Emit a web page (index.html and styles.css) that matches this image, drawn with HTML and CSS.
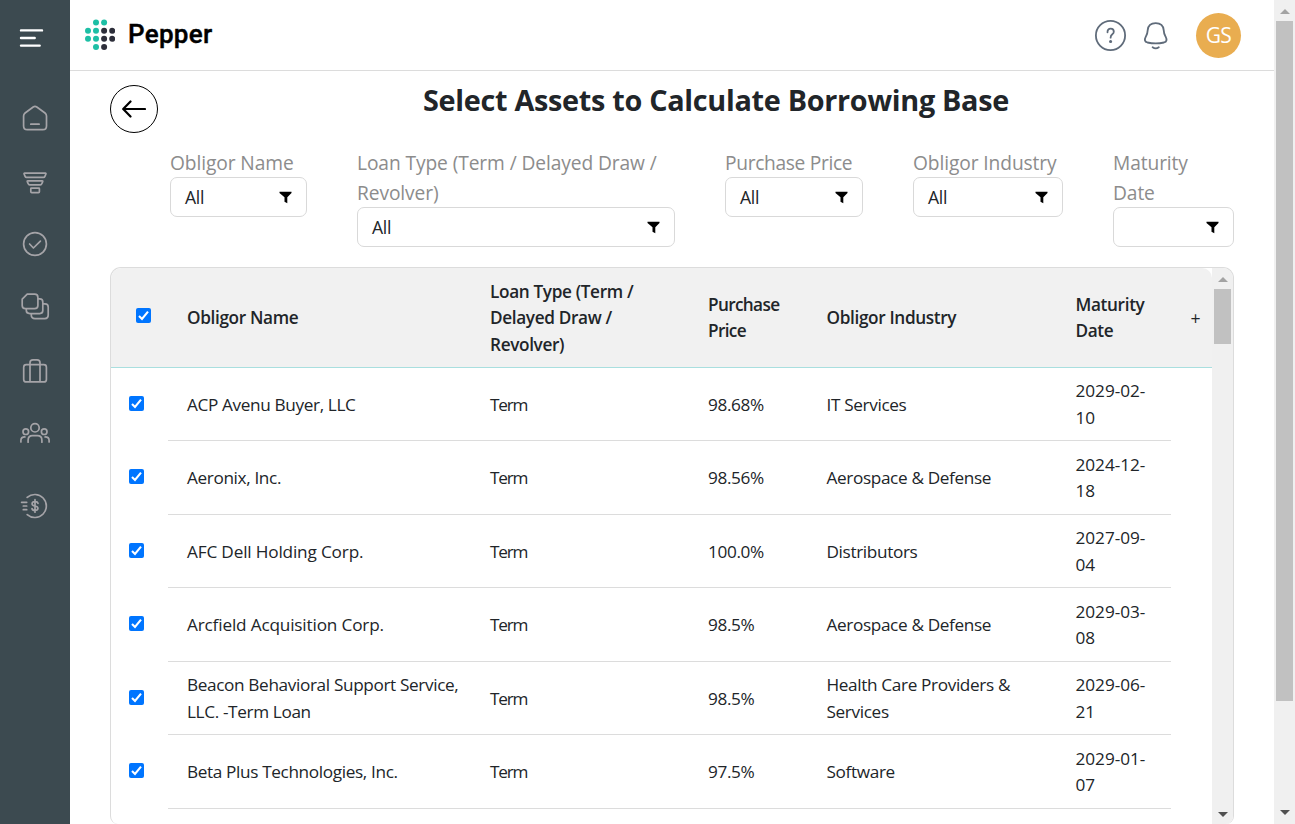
FILE: index.html
```html
<!DOCTYPE html>
<html lang="en">
<head>
<meta charset="utf-8">
<title>Pepper</title>
<link rel="stylesheet" href="styles.css">
</head>
<body>
<svg class="defs" width="0" height="0">
  <symbol id="funnel" viewBox="0 0 14 14"><path d="M.500 1.700h12v1.300L8.300 7.200V13.300L5.500 11.700V7.200L.500 3z"/></symbol>
  <symbol id="check" viewBox="0 0 15 15"><rect width="15" height="15" rx="2" fill="#0075ff"/><path d="M3 8l3 3 6-7.3" fill="none" stroke="#fff" stroke-width="2.1"/></symbol>
  <symbol id="up" viewBox="0 0 10 5"><path d="M0 5L5 0l5 5z"/></symbol>
  <symbol id="down" viewBox="0 0 10 5"><path d="M0 0h10L5 5z"/></symbol>
</svg>
<div class="app">
  <nav class="sidebar">
    <svg width="70" height="530" viewBox="0 0 70 530">
      <g stroke="#fff" stroke-width="2.4" stroke-linecap="round"><path d="M21 30.4h21M21 38h13.7M21 45.6h18.7"/></g>
      <g fill="none" stroke="#a5a4a8" stroke-width="1.7" stroke-linecap="round" stroke-linejoin="round">
        <path d="M33.2 107q1.8-1.3 3.6 0l8.2 6q1.5 1.2 1.5 3V126q0 3.7-3.7 3.7H27.3q-3.7 0-3.7-3.7v-10q0-1.8 1.5-3zM30.8 124.2h8.3"/>
        <path d="M24.6 173.2h20.8q.8 0 .5.8l-1 2.4q-.4 1-1.4 1h-17q-1 0-1.4-1l-1-2.4q-.3-.8.5-.8zM27.8 180.8h14.4q.8 0 .5.8l-.9 2.2q-.4 1-1.4 1H29.6q-1 0-1.4-1l-.9-2.2q-.3-.8.5-.8zM31.4 188.2h7.4q.6 0 .6.6v3q0 .9-.9.9h-6.8q-.9 0-.9-.9v-3q0-.6.6-.6z"/>
        <circle cx="35" cy="244" r="11.4"/><path d="M29.6 244l3.8 4 7-6.8"/>
        <path d="M27.2 294.2h7.4q3.3 0 3.3 3.3v8q0 3.2-3.3 3.2h-9.2q-3.2 0-3.2-3.2v-6.3zM38 298.9h1.8q3 0 3 3v8.7q0 3-3 3h-10q-3.5 0-3.5-3v-1.8M43 303.9h2q3.2 0 3.2 3.2v8.2q0 3.3-3.3 3.3H35q-3.7 0-3.7-3.3v-1.6"/>
        <path d="M26.3 364.6h17.5q2.6 0 2.6 2.6v12.2q0 2.5-2.6 2.5H26.3q-2.6 0-2.6-2.5v-12.2q0-2.6 2.6-2.6zM30 381.5v-18.8q0-2.9 2.9-2.9h4.2q2.9 0 2.9 2.9v18.8"/>
        <circle cx="35" cy="427.8" r="4.2"/><circle cx="25.8" cy="431.7" r="2.8"/><circle cx="44.2" cy="431.7" r="2.8"/>
        <path d="M28.1 442.2v-2q0-4.5 4.5-4.5h4.8q4.5 0 4.5 4.5v2M20.9 442v-1.5q0-3.6 4-3.6M49.1 442v-1.5q0-3.6-4-3.6"/>
        <path d="M27.2 497.4a11.5 11.5 0 1 1 0 17.2M21.6 502.3h5.1M23.3 506h3.4M23.3 509.7h3.4"/>
        <path d="M38 503.4q-.4-1.8-3-1.8-2.9 0-2.9 2.1 0 1.8 2.9 2.3t2.9 2.3q0 2.1-2.9 2.1-2.7 0-3-1.9M35 499.7v12.5"/>
      </g>
    </svg>
  </nav>
  <main class="main">
    <header class="topbar">
      <svg class="logo" width="30" height="31" viewBox="0 0 30 31">
        <g fill="#1dbfa5"><circle cx="11" cy="3.6" r="3"/><circle cx="19.1" cy="3.6" r="3"/><circle cx="3" cy="11.8" r="3"/><circle cx="11" cy="11.8" r="3"/><circle cx="3" cy="19.8" r="3"/><circle cx="11" cy="19.8" r="3"/><circle cx="11" cy="28" r="3"/></g>
        <g fill="#2d2e3a"><circle cx="19.1" cy="11.8" r="3"/><circle cx="27.2" cy="11.8" r="3"/><circle cx="19.1" cy="19.8" r="3"/><circle cx="27.2" cy="19.8" r="3"/><circle cx="19.1" cy="28" r="3"/></g>
      </svg>
      <span class="brand">Pepper</span>
      <svg class="tools" width="74" height="33" viewBox="0 0 74 33" fill="none" stroke="#5f6b7a" stroke-width="1.8" stroke-linecap="round" stroke-linejoin="round">
        <circle cx="15.5" cy="16.5" r="14.6"/><path d="M12.5 13.3q0-3.6 3.2-3.6 3.1 0 3.1 3 0 1.5-1.5 2.5-1.7 1.2-1.7 3.5"/><circle cx="15.6" cy="22.5" r=".7" fill="#5f6b7a"/>
        <path d="M60.7 4.1q7.400 0 8 7 .2 4 1.8 6.3 2.6 5-1.5 6.1-8.3 1.8-16.6 0-4.1-1.1-1.5-6.1 1.6-2.3 1.8-6.3.6-7 8-7zM57.6 28.2q3.1 2.2 6.2 0"/>
      </svg>
      <span class="avatar">GS</span>
    </header>
    <section class="content">
      <div class="titlebar">
        <button class="back" aria-label="Back"><svg width="24" height="18" viewBox="0 0 24 18" fill="none" stroke="#000" stroke-width="2.2" stroke-linecap="round" stroke-linejoin="round"><path d="M1.5 9H23M8.5 1.5L1.200 9l7.300 7.500"/></svg></button>
        <h1>Select Assets to Calculate Borrowing Base</h1>
      </div>
      <div class="filters">
        <div class="filter"><label>Obligor Name</label><div class="select">All<svg><use href="#funnel"/></svg></div></div>
        <div class="filter"><label>Loan Type (Term / Delayed Draw /<br>Revolver)</label><div class="select">All<svg><use href="#funnel"/></svg></div></div>
        <div class="filter tight"><label>Purchase Price</label><div class="select">All<svg><use href="#funnel"/></svg></div></div>
        <div class="filter"><label>Obligor Industry</label><div class="select">All<svg><use href="#funnel"/></svg></div></div>
        <div class="filter"><label>Maturity<br>Date</label><div class="select"><svg><use href="#funnel"/></svg></div></div>
      </div>
      <div class="panel">
        <div class="table">
          <div class="row head">
            <div class="pick"><svg class="box"><use href="#check"/></svg></div>
            <div class="cells"><div>Obligor Name</div><div>Loan Type (Term /<br>Delayed Draw /<br>Revolver)</div><div class="tight">Purchase<br>Price</div><div>Obligor Industry</div><div>Maturity<br>Date</div></div>
            <div class="plus">+</div>
          </div>
          <div class="row"><div class="pick"><svg class="box"><use href="#check"/></svg></div><div class="cells"><div>ACP Avenu Buyer, LLC</div><div class="term">Term</div><div>98.68%</div><div>IT Services</div><div class="date">2029-02-<br>10</div></div></div>
          <div class="row"><div class="pick"><svg class="box"><use href="#check"/></svg></div><div class="cells"><div>Aeronix, Inc.</div><div class="term">Term</div><div>98.56%</div><div>Aerospace &amp; Defense</div><div class="date">2024-12-<br>18</div></div></div>
          <div class="row"><div class="pick"><svg class="box"><use href="#check"/></svg></div><div class="cells"><div class="wide">AFC Dell Holding Corp.</div><div class="term">Term</div><div>100.0%</div><div>Distributors</div><div class="date">2027-09-<br>04</div></div></div>
          <div class="row"><div class="pick"><svg class="box"><use href="#check"/></svg></div><div class="cells"><div class="wide">Arcfield Acquisition Corp.</div><div class="term">Term</div><div>98.5%</div><div>Aerospace &amp; Defense</div><div class="date">2029-03-<br>08</div></div></div>
          <div class="row"><div class="pick"><svg class="box"><use href="#check"/></svg></div><div class="cells"><div>Beacon Behavioral Support Service,<br>LLC. -Term Loan</div><div class="term">Term</div><div>98.5%</div><div>Health Care Providers &amp;<br>Services</div><div class="date">2029-06-<br>21</div></div></div>
          <div class="row"><div class="pick"><svg class="box"><use href="#check"/></svg></div><div class="cells"><div>Beta Plus Technologies, Inc.</div><div class="term">Term</div><div>97.5%</div><div>Software</div><div class="date">2029-01-<br>07</div></div></div>
        </div>
        <div class="scrollbar inner"><svg class="arrow"><use href="#up"/></svg><div class="thumb"></div><svg class="arrow dark"><use href="#down"/></svg></div>
      </div>
    </section>
  </main>
  <div class="scrollbar outer"><svg class="arrow"><use href="#up"/></svg><div class="thumb"></div><svg class="arrow dark"><use href="#down"/></svg></div>
</div>
</body>
</html>
```
FILE: styles.css
```css
* { box-sizing: border-box; }
body { margin: 0; font-family: "Open Sans", "Noto Sans", sans-serif; color: #212529; background: #fff; overflow: hidden; }
.defs { display: none; }
.app { display: flex; height: 824px; overflow: hidden; }
.sidebar { width: 70px; flex: none; background: #3c4a50; }
.sidebar svg { display: block; }
.main { width: 1204px; flex: none; display: flex; flex-direction: column; }
.topbar { height: 71px; flex: none; border-bottom: 1px solid #dcdcdc; display: flex; align-items: center; padding: 0 33px 0 15px; }
.logo { flex: none; margin-top: -2px; }
.brand { margin-left: 13px; margin-top: -2px; font: 500 26px/32px Roboto, sans-serif; letter-spacing: .3px; color: #000; -webkit-text-stroke: .4px #000; }
.tools { margin-left: auto; margin-right: 27px; }
.avatar { width: 45px; height: 45px; border-radius: 50%; background: #e9ad50; color: #fff; font-size: 21px; line-height: 45px; text-align: center; letter-spacing: -.7px; }
.content { flex: 1; min-height: 0; padding: 14px 40px 0; display: flex; flex-direction: column; }
.titlebar { display: flex; height: 63px; flex: none; align-items: flex-start; }
.back { width: 48px; height: 48px; border: 1px solid #000; border-radius: 50%; background: #fff; padding: 0; display: grid; place-items: center; }
h1 { margin: 0 auto; padding-left: 40px; font-size: 28.8px; line-height: 30px; font-weight: 700; letter-spacing: -.29px; white-space: nowrap; }
.filters { display: grid; grid-template-columns: 137px 318px 138px 150px 121px; column-gap: 50px; padding-left: 60px; height: 119px; flex: none; align-items: start; }
.filter { min-width: 0; }
.filter label { display: block; font-size: 19.2px; line-height: 30px; margin-bottom: -1px; color: #8c8c8c; white-space: nowrap; letter-spacing: -.1px; }
.filter.tight label { letter-spacing: -.33px; }
.select { height: 40px; border: 1px solid #d9d9d9; border-radius: 7px; display: flex; align-items: center; padding: 0 13px 0 14px; font-size: 17.6px; letter-spacing: -.3px; }
.select svg { width: 14px; height: 14px; margin-left: auto; }
.panel { width: 1124px; flex: 1; min-height: 0; display: flex; border: 1px solid #dcdcdc; border-bottom: 0; border-radius: 11px 11px 8px 8px; overflow: hidden; }
.table { width: 1101px; flex: none; font-size: 17.2px; line-height: 26.4px; }
.row { display: flex; height: 73.5px; }
.pick { width: 57px; flex: none; padding: 28.4px 0 0 18px; }
.box { width: 15px; height: 15px; display: block; }
.cells { width: 1003px; flex: none; display: grid; grid-template-columns: 303px 218px 118.5px 249px 114.5px; align-items: center; border-bottom: 1px solid #dcdcdc; white-space: nowrap; letter-spacing: -.36px; }
.cells > div { padding-left: 19px; padding-top: 2px; }
.cells > .wide { letter-spacing: -.17px; }
.cells > .term { letter-spacing: -1.2px; }
.cells > .date { letter-spacing: -.02px; }
.head { height: 99.6px; background: #f1f1f1; border-bottom: 1px solid #a9dfdf; border-radius: 10px 10px 0 0; font-weight: 600; }
.head .pick { padding: 40px 0 0 25px; }
.head .cells { border: 0; letter-spacing: -.35px; }
.head .cells > .tight { letter-spacing: -.65px; }
.plus { flex: 1; display: grid; place-items: center; padding: 2px 0 0 8px; font-weight: 400; font-size: 17.6px; }
.scrollbar { width: 21px; flex: none; background: #f0f0f0; display: flex; flex-direction: column; align-items: center; }
.arrow { width: 10px; height: 5px; flex: none; margin-top: 9px; fill: #a3a3a3; }
.thumb { width: 17px; background: #c1c1c1; margin-top: 7px; }
.inner .thumb { height: 55px; }
.outer .thumb { height: 680px; }
.dark { margin-top: auto; margin-bottom: 9px; fill: #505050; }
.inner .dark { margin-bottom: 7px; }
```
